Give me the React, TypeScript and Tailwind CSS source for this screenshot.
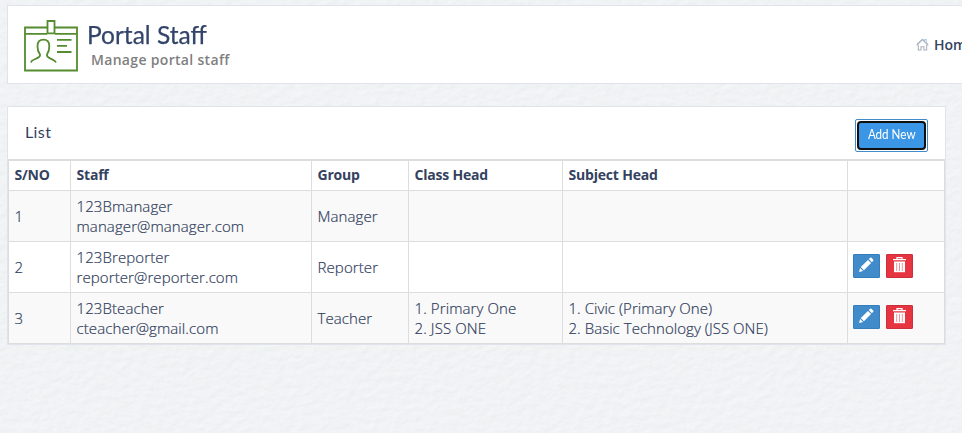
import type { ReactNode } from "react";

const columns = ["S/NO", "Staff", "Group", "Class Head", "Subject Head", ""];

interface Staff {
  name: string;
  email: string;
  group: string;
  classes: string[];
  subjects: string[];
  editable: boolean;
}

const staff: Staff[] = [
  { name: "123Bmanager", email: "manager@manager.com", group: "Manager", classes: [], subjects: [], editable: false },
  { name: "123Breporter", email: "reporter@reporter.com", group: "Reporter", classes: [], subjects: [], editable: true },
  {
    name: "123Bteacher",
    email: "cteacher@gmail.com",
    group: "Teacher",
    classes: ["1. Primary One", "2. JSS ONE"],
    subjects: ["1. Civic (Primary One)", "2. Basic Technology (JSS ONE)"],
    editable: true,
  },
];

// Embossed paper grain, lit softly from the upper left.
function PaperTexture() {
  return (
    <svg className="absolute inset-0 -z-10 h-full w-full" aria-hidden="true">
      <filter id="paper" x="0" y="0" width="100%" height="100%" colorInterpolationFilters="sRGB">
        <feTurbulence type="fractalNoise" baseFrequency="0.11 0.15" numOctaves="3" seed="8" result="noise" />
        <feDiffuseLighting in="noise" surfaceScale="0.55" lightingColor="#ffffff" result="lit">
          <feDistantLight azimuth="235" elevation="60" />
        </feDiffuseLighting>
        <feColorMatrix in="lit" values="0.2 0 0 0 0.769  0 0.2 0 0 0.779  0 0 0.2 0 0.785  0 0 0 0 1" />
      </filter>
      <rect width="100%" height="100%" filter="url(#paper)" />
    </svg>
  );
}

function BadgeIcon() {
  return (
    <svg width="54" height="52" viewBox="0 0 54 52" fill="none" stroke="#548c2f" strokeWidth="1.8" className="shrink-0">
      <path d="M23 7.5H1V50.5H53V7.5H31" />
      <path d="M1 13.8H23M31 13.8H53" />
      <path d="M23.5 1H30.5V13.3H23.5Z" />
      <path d="M7 42.5C7.5 39.5 10 40 12.5 38.5C14.8 37.2 16.5 37 16 34.5C14 31.5 13.3 28.5 13.5 26C13.6 22 15.5 19.7 19.5 19.7C23.5 19.7 25.2 22 25.3 26C25.4 28.5 24.8 31.5 23 34.5C22.5 37 24 37.2 26.3 38.5C28.8 39.8 31 40 32 42.5" />
      <path d="M33 19.8H47.5M33 25.9H43M33 32H47.5" />
    </svg>
  );
}

function HomeIcon() {
  return (
    <svg width="13" height="14" viewBox="0 0 14 14" fill="none" stroke="#a9aebb" strokeWidth="1.1">
      <path d="M.8 7.4 6.9 1.3 13.2 7.4" />
      <path d="M.8 6.2 6.9 .6 9.3 2.7V1H11V4.3L13.2 6.3" stroke="#7fa6c4" strokeWidth=".7" />
      <path d="M2.5 7V12.5H5.4V8.8H8.5V12.5H11.5V7" />
    </svg>
  );
}

function PencilIcon() {
  return (
    <svg width="16" height="16" viewBox="0 0 16 16" fill="#fff">
      <path d="M1 15 2.1 10.9 5.1 13.9ZM2.8 10.1 10 2.9 13.1 6 5.9 13.2ZM10.8 2.1 12.3.7Q12.8.2 13.4.8L15.3 2.7Q15.7 3.3 15.2 3.8L13.9 5.2Z" />
    </svg>
  );
}

function TrashIcon() {
  return (
    <svg width="13" height="16" viewBox="0 0 13 16">
      <path d="M4 2V.6H9V2M0 2.6H13" fill="none" stroke="#fff" strokeWidth="1.3" />
      <path d="M1 4.5H12V15.2H1Z" fill="#fff" />
      <path d="M3.7 6V14M6.5 6V14M9.3 6V14" stroke="#ec969b" strokeWidth="1" />
    </svg>
  );
}

function ActionButton({ label, tone, children }: { label: string; tone: string; children: ReactNode }) {
  return (
    <button aria-label={label} className={`flex h-6 w-[27px] items-center justify-center rounded-[1px] border pb-0.5 ${tone}`}>
      {children}
    </button>
  );
}

export default function App() {
  return (
    <div className="relative isolate h-[433px] w-[962px] overflow-hidden pl-[7px] pt-[5px] font-['Open_Sans',sans-serif] text-[#34425f]">
      <PaperTexture />
      <header className="flex h-[79px] w-[980px] border border-[#e0e3ed] bg-white pl-4 pt-[14px]">
        <BadgeIcon />
        <div className="ml-[9px]">
          <h1 className="h-8 origin-left scale-x-[.98] whitespace-nowrap font-['Lato','Open_Sans',sans-serif] text-[25px] leading-[28px] text-[#33446a] [-webkit-text-stroke:0.25px_#33446a]">Portal Staff</h1>
          <p className="ml-1 whitespace-nowrap text-sm font-semibold leading-4 tracking-[.32px] text-[#7f7f7f]">Manage portal staff</p>
        </div>
        <nav className="ml-auto flex h-[50px] w-[70px] items-center gap-[5px] text-sm font-semibold">
          <HomeIcon />
          <span>Home</span>
        </nav>
      </header>

      <main className="mt-[22px] w-[939px] border border-[#dfe4ec] bg-white">
        <div className="flex h-[52px] items-start justify-between pl-[17px] pr-[17px] pt-3">
          <h2 className="pt-[3px] font-['Lato','Open_Sans',sans-serif] text-base leading-5 tracking-[.4px]">List</h2>
          <button className="h-[33px] w-[73px] rounded-[2px] border border-[#428bca] bg-white p-px">
            <span className="flex h-full items-center justify-center rounded-[4px] border-2 border-[#101010] bg-[#3b97e6] pb-[4px] font-['Lato','Open_Sans',sans-serif] text-[14px] text-white">
              <span className="scale-x-[.83] whitespace-nowrap">Add New</span>
            </span>
          </button>
        </div>
        <table className="w-[937px] table-fixed border-collapse text-left leading-5">
          <colgroup>
            <col className="w-[62px]" />
            <col className="w-[241px]" />
            <col className="w-[97px]" />
            <col className="w-[154px]" />
            <col className="w-[285px]" />
            <col className="w-[97px]" />
          </colgroup>
          <thead>
            <tr className="h-[30px]">
              {columns.map((column, index) => (
                <th key={index} className="border border-t-2 border-[#dddddd] px-[5.5px] pb-px pt-0 text-sm font-bold tracking-[-.2px]">{column}</th>
              ))}
            </tr>
          </thead>
          <tbody className="text-[15px] font-light tracking-[.1px] text-[#303d5c] [-webkit-text-stroke:0.2px_#303d5c]">
            {staff.map((person, index) => (
              <tr key={person.name} className="h-[51px] odd:bg-[#f9f9f9] [&>td]:border [&>td]:border-[#dddddd] [&>td]:pl-[5.5px] [&>td]:py-0 [&>td:last-child]:pl-[4.5px]">
                <td>{index + 1}</td>
                <td>
                  <div>{person.name}</div>
                  <div>{person.email}</div>
                </td>
                <td>{person.group}</td>
                <td>{person.classes.map((item) => <div key={item}>{item}</div>)}</td>
                <td>{person.subjects.map((item) => <div key={item} className="tracking-[.05px]">{item}</div>)}</td>
                <td>
                  {person.editable && (
                    <div className="flex gap-1.5 pb-px">
                      <ActionButton label="Edit" tone="border-[#357ebd] bg-[#428bca]"><PencilIcon /></ActionButton>
                      <ActionButton label="Delete" tone="border-[#c9303b] bg-[#e63540]"><TrashIcon /></ActionButton>
                    </div>
                  )}
                </td>
              </tr>
            ))}
          </tbody>
        </table>
      </main>
    </div>
  );
}
